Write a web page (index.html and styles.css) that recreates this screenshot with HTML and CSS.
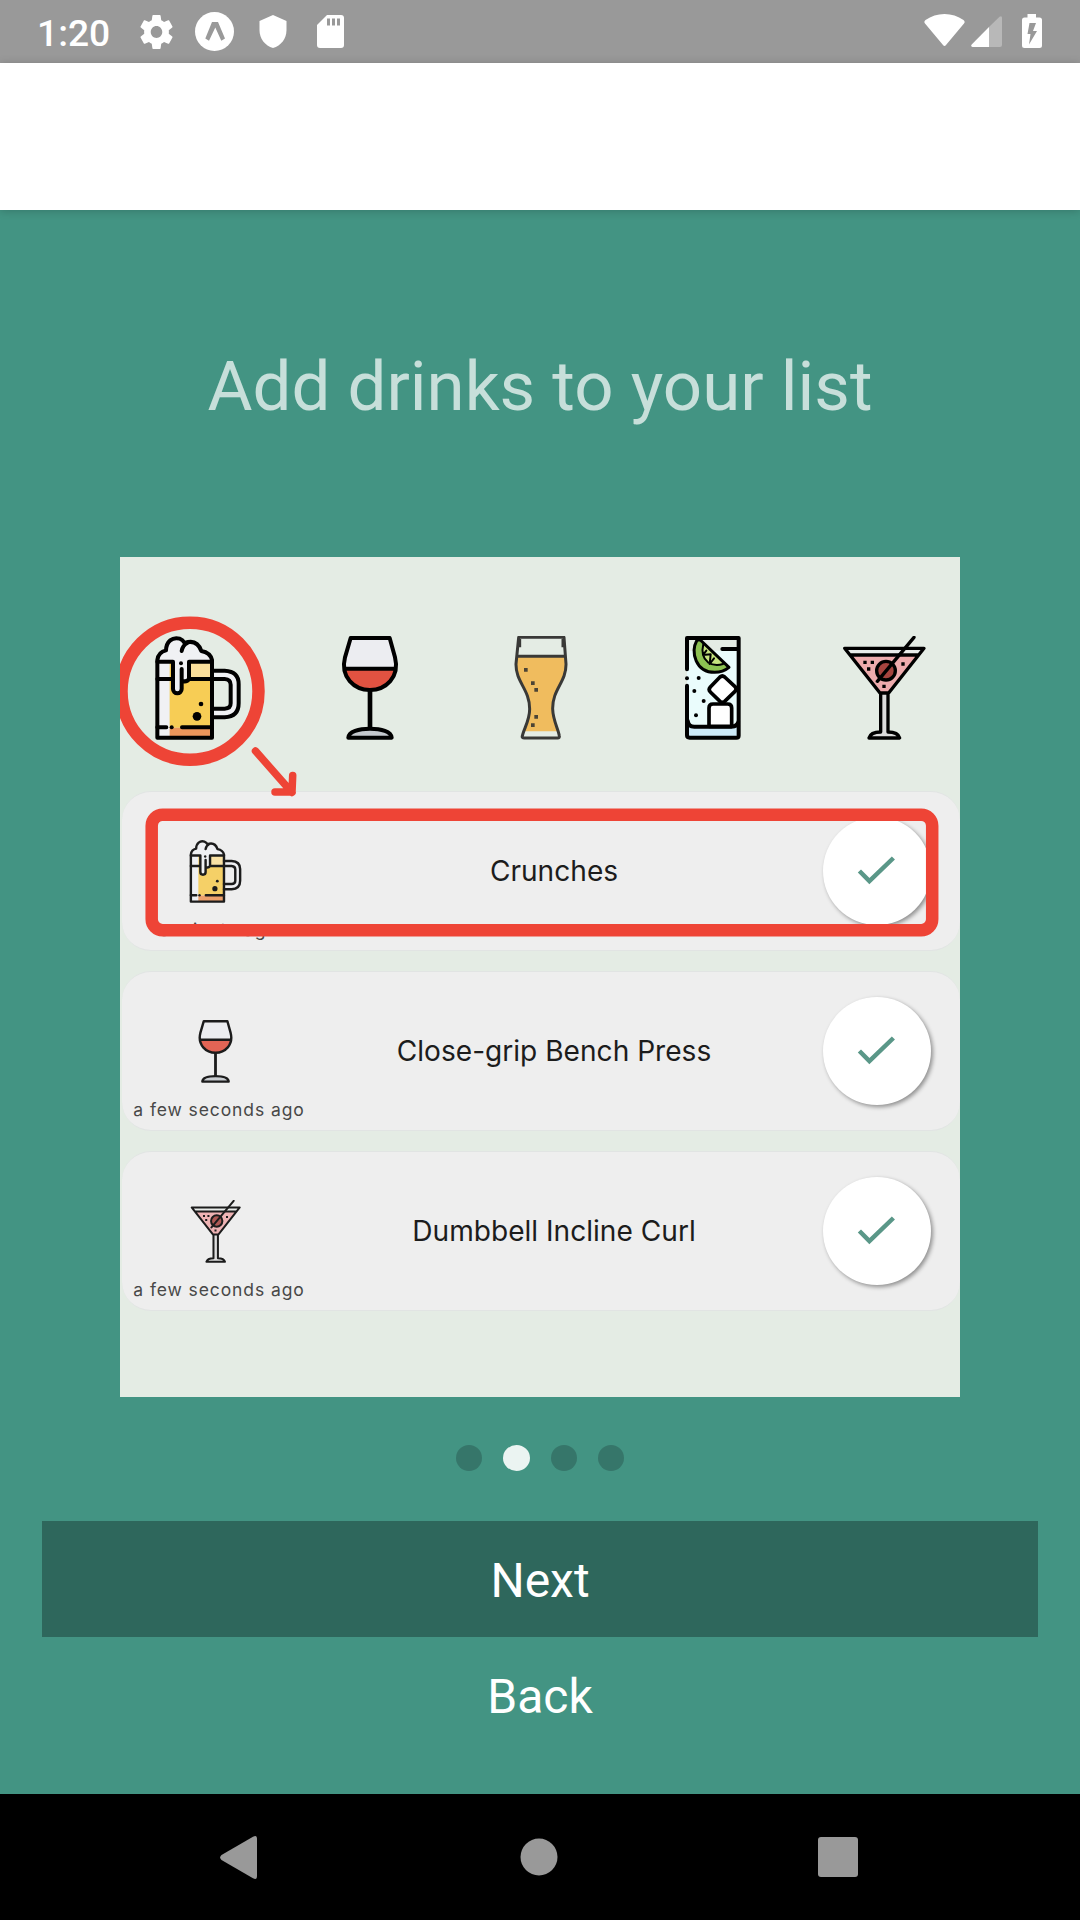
FILE: index.html
```html
<!DOCTYPE html>
<html lang="en">
<head>
<meta charset="utf-8">
<title>Add drinks to your list</title>
<link rel="stylesheet" href="styles.css">
</head>
<body>
<svg class="sprite" aria-hidden="true">
  <symbol id="mug" viewBox="109 106 312 312">
    <path fill="#f0f1f4" d="M143 183V170Q148 152 169 149C170 122 188 110 205 113Q218 115 225 125Q262 115 275 152Q302 154 307 180V183Z"/>
    <path fill="#f0f1f4" d="M143 183H216V235H180V411H143Z"/>
    <path fill="#f7cd55" d="M180 183H307V381H180Z"/>
    <path fill="#fbe09c" d="M240 183H307V235H240Z"/>
    <path fill="#ec965b" d="M180 381H307V411H180Z"/>
    <path fill="#f0f1f4" d="M190 180H240V235Q230 245 216 240V265A13 13 0 0 1 190 265Z"/>
    <path fill="#f0f1f4" fill-rule="evenodd" d="M307 210H345Q387 212 387 250V308Q387 348 345 350H307ZM307 235V324H345Q363 324 363 308V252Q363 236 345 235Z"/>
    <g fill="none" stroke="#000" stroke-width="12" stroke-linejoin="round" stroke-linecap="round">
      <path d="M143 411V178Q146 154 169 149C170 122 188 108 210 114Q219 117 225 127Q262 114 275 151Q302 156 307 178V411Z"/>
      <path d="M233 127Q219 134 216 151M143 183H190V265A13 13 0 0 0 216 265V205M216 240Q230 246 238 235V183H307M143 235H188M240 235H307M143 380H170M217 380H307"/>
      <path d="M307 210H345Q387 212 387 250V308Q387 348 345 350H307M307 235H345Q363 236 363 252V308Q363 324 345 324H307"/>
    </g>
    <circle cx="214" cy="188" r="6"/><circle cx="186" cy="380" r="6"/><circle cx="274" cy="310" r="7"/><circle cx="262" cy="347" r="13"/>
  </symbol>
  <symbol id="wine" viewBox="-8 76 312 312">
    <path fill="#ecedf1" d="M90 82H207L223 140C238 200 195 238 148 238S58 200 73 140Z"/>
    <path fill="#e25241" d="M71 175H225C222 212 190 238 148 238S74 212 71 175Z"/>
    <path fill="#c5c9ce" d="M83 381C84 362 115 354 148 354S212 362 213 381Z"/>
    <g fill="none" stroke="#000" stroke-width="12" stroke-linejoin="round">
      <path d="M90 82H207L223 140C238 200 195 238 148 238S58 200 73 140ZM71 174H225M83 381C84 362 115 354 148 354S212 362 213 381Z"/>
      <path stroke-width="14" d="M148 238V354"/>
    </g>
  </symbol>
  <symbol id="pint" viewBox="508 76 312 312">
    <path fill="#f0bc5e" d="M590 137H738L740 160C740 215 698 235 699 295C700 322 710 344 715 362H613C620 340 630 322 630 295C630 235 588 215 589 160Z"/>
    <path fill="none" stroke="#393937" stroke-width="9" stroke-linejoin="round" d="M597 80H733L739 160C740 215 698 235 699 295C700 330 716 355 719 376Q720 382 714 382H614Q606 382 608 376C612 355 630 330 630 295C630 235 588 215 589 160ZM592 137H736M600 85V110M730 85V110"/>
    <path fill="#4c4435" d="M613 172h11v11h-11zM634 212h11v11h-11zM644 232h11v11h-11zM644 313h11v11h-11zM634 338h11v11h-11z"/>
  </symbol>
  <symbol id="gin" viewBox="4 76 312 312">
    <path fill="#eafcfc" d="M82 120H237V348H82Z"/>
    <path fill="#cdeaf8" d="M82 348H237V381H82Z"/>
    <path fill="#8cc152" d="M118 88L208 170Q190 185 165 185C108 185 92 125 112 88Z"/>
    <path fill="#c5e27f" d="M131 100L192 158Q170 168 145 155Q122 137 131 100Z"/>
    <g fill="none" stroke="#000" stroke-width="12" stroke-linejoin="round" stroke-linecap="round">
      <path d="M82 176V82H237V375Q237 381 230 381H90Q82 381 82 374V225M188 115H237M84 330Q86 348 104 348H215Q234 348 237 330"/>
      <path stroke-width="9" d="M122 88L208 170Q190 185 165 185C108 185 92 125 112 88Z"/>
      <path stroke-width="6" d="M131 100Q122 137 145 155Q165 168 190 160M140 120L130 133L153 131L150 160L163 143"/>
      <path fill="#fff" stroke-width="11" d="M181 199Q188 193 195 199L226 228Q233 235 226 242L195 272Q188 278 181 272L152 244Q145 237 152 229Z"/>
      <path fill="#fff" stroke-width="11" d="M148 347V292Q148 280 160 280H204Q216 280 216 292V347Z"/>
    </g>
    <circle cx="82" cy="203" r="6"/><circle cx="117" cy="202" r="6"/><circle cx="104" cy="241" r="6"/><circle cx="132" cy="271" r="6"/><circle cx="109" cy="314" r="6"/>
  </symbol>
  <symbol id="martini" viewBox="516 76 312 312">
    <path fill="#e9ecea" d="M554 113H792L775 134H570Z"/>
    <path fill="#eeabad" d="M571 134H775L686 247H660Z"/>
    <path fill="#dcdcdc" d="M627 382Q632 364 662 364V247H684V364Q714 364 719 382Z"/>
    <circle cx="678" cy="180" r="27" fill="#a5443f"/>
    <g fill="none" stroke="#000" stroke-width="10" stroke-linejoin="round" stroke-linecap="round">
      <path d="M554 113H792L686 247H660ZM571 133H774M627 382Q632 364 662 364V247H684V364Q714 364 719 382Z"/>
      <circle cx="678" cy="180" r="28"/>
      <path d="M762 80L652 212"/>
    </g>
    <path d="M610 150h10v10h-10zM632 150h10v10h-10zM621 170h10v10h-10zM724 155h10v10h-10zM667 222h10v10h-10z"/>
  </symbol>
  <symbol id="check" viewBox="0 0 108 108">
    <path fill="none" stroke="#5a9788" stroke-width="4.5" d="M36.4 54L46.4 64.200L70.4 41"/>
  </symbol>
</svg>

<header class="status">
  <span class="clock">1:20</span>
  <svg class="gear" width="33" height="34" viewBox="2 2 20 20" preserveAspectRatio="none"><path fill="#fff" d="M19.43 12.98c.04-.32.07-.64.07-.98s-.03-.66-.07-.98l2.11-1.65c.19-.15.24-.42.12-.64l-2-3.46c-.12-.22-.39-.3-.61-.22l-2.49 1c-.52-.4-1.08-.73-1.69-.98l-.38-2.65C14.46 2.18 14.25 2 14 2h-4c-.25 0-.46.18-.49.42l-.38 2.65c-.61.25-1.17.59-1.69.98l-2.49-1c-.23-.09-.49 0-.61.22l-2 3.46c-.13.22-.07.49.12.64l2.11 1.65c-.04.32-.07.65-.07.98s.03.66.07.98l-2.11 1.65c-.19.15-.24.42-.12.64l2 3.46c.12.22.39.3.61.22l2.49-1c.52.4 1.08.73 1.69.98l.38 2.65c.03.24.24.42.49.42h4c.25 0 .46-.18.49-.42l.38-2.65c.61-.25 1.17-.59 1.69-.98l2.49 1c.23.09.49 0 .61-.22l2-3.46c.12-.22.07-.49-.12-.64l-2.11-1.65zM12 15.5c-1.93 0-3.5-1.57-3.5-3.5s1.57-3.5 3.5-3.5 3.5 1.57 3.5 3.5-1.57 3.5-3.5 3.5z"/></svg>
  <svg class="expo" width="39" height="39" viewBox="0 0 39 39"><circle cx="19.5" cy="19.5" r="19.5" fill="#fff"/><path fill="#999" d="M17 10H23L30 26.5L26.3 28.8L20.3 15.5L14 28.8L10.3 26.5Z"/></svg>
  <svg class="shield" width="28" height="33" viewBox="0 0 28 33"><path fill="#fff" d="M14 0L27.5 6V15C27.5 24 22 30.500 14 33C6 30.500 .5 24 .5 15V6Z"/></svg>
  <svg class="sd" width="27" height="33" viewBox="0 0 27 33"><path fill="#fff" d="M10 0H24Q27 0 27 3V30Q27 33 24 33H3Q0 33 0 30V10Z"/><path fill="#999" d="M10 3.500h3v7h-3zM15 3.500h3v7h-3zM20 3.500h3v7h-3z"/></svg>
  <svg class="wifi" width="41" height="33" viewBox="0 0 41 33"><path fill="#fff" d="M1 9.500Q-.5 7.500 1.500 6Q10 0 20.500 0T39.500 6Q41.500 7.500 40 9.500L22 31Q20.500 33 19 31Z"/></svg>
  <svg class="signal" width="31" height="31" viewBox="0 0 31 31"><path fill="#b8b8b8" d="M28.500 .7Q31 -.8 31 2V29Q31 31 29 31H18V11Z"/><path fill="#fff" d="M18 11V31H1.500Q-.7 30.500 .7 28.500Z"/></svg>
  <svg class="battery" width="20" height="34" viewBox="0 0 20 34"><path fill="#fff" d="M5.500 0H14V3.500H17.500Q20 3.500 20 6V31.500Q20 34 17.500 34H2.500Q0 34 0 31.500V6Q0 3.500 2.500 3.500H5.500Z"/><path fill="#999" d="M7.500 9H14L11 17H15L7 30.500L8.500 20H5.500Z"/></svg>
</header>
<div class="toolbar"></div>

<main class="screen">
  <h1 class="title">Add drinks to your list</h1>

  <section class="preview">
    <div class="drinks">
      <svg class="drink"><use href="#mug"/></svg>
      <svg class="drink"><use href="#wine"/></svg>
      <svg class="drink"><use href="#pint"/></svg>
      <svg class="drink"><use href="#gin"/></svg>
      <svg class="drink"><use href="#martini"/></svg>
    </div>
    <div class="cards">
      <article class="card">
        <div class="entry"><svg class="entry-icon"><use href="#mug"/></svg><span class="ago">a minute ago</span></div>
        <span class="name">Crunches</span>
        <span class="done"><svg width="108" height="108"><use href="#check"/></svg></span>
      </article>
      <article class="card">
        <div class="entry"><svg class="entry-icon"><use href="#wine"/></svg><span class="ago">a few seconds ago</span></div>
        <span class="name">Close-grip Bench Press</span>
        <span class="done"><svg width="108" height="108"><use href="#check"/></svg></span>
      </article>
      <article class="card">
        <div class="entry"><svg class="entry-icon"><use href="#martini"/></svg><span class="ago">a few seconds ago</span></div>
        <span class="name">Dumbbell Incline Curl</span>
        <span class="done"><svg width="108" height="108"><use href="#check"/></svg></span>
      </article>
    </div>
    <svg class="marks" viewBox="120 557 840 840">
      <g fill="none" stroke="#ee4436" stroke-width="12.500">
        <ellipse cx="190" cy="691.200" rx="68.500" ry="68.500"/>
        <rect x="151.700" y="814.700" width="780.500" height="115.500" rx="11"/>
        <path stroke-width="7.500" stroke-linecap="round" stroke-linejoin="round" d="M255.500 751L292 792.500M292.700 775.500L292 792H275"/>
      </g>
    </svg>
  </section>

  <div class="dots"><i class="dot"></i><i class="dot dot-on"></i><i class="dot"></i><i class="dot"></i></div>
  <button class="btn btn-next">Next</button>
  <button class="btn">Back</button>
</main>

<nav class="nav">
  <svg width="37" height="43" viewBox="0 0 37 43"><path fill="#999" d="M33 .8Q37 -1.500 37 3V40Q37 44.500 33 42.200L1.500 24Q-1.200 21.500 1.500 19Z"/></svg>
  <svg class="home" width="38" height="38" viewBox="0 0 38 38"><circle cx="19" cy="19" r="18.500" fill="#999"/></svg>
  <svg width="40" height="40" viewBox="0 0 40 40"><rect width="40" height="40" rx="3" fill="#999"/></svg>
</nav>
</body>
</html>
```
FILE: styles.css
```css
* { box-sizing: border-box; }

body {
  margin: 0;
  width: 1080px;
  height: 1920px;
  display: flex;
  flex-direction: column;
  overflow: hidden;
  background: #439483;
  font-family: Roboto, sans-serif;
}

svg { display: block; flex: none; }
.sprite { position: absolute; width: 0; height: 0; }

.status {
  height: 63px;
  flex: none;
  display: flex;
  align-items: center;
  padding: 0 38.500px 0 37px;
  background: #999;
  color: #fff;
}
.clock { width: 103px; font-size: 37.200px; font-weight: 500; line-height: 44px; padding-top: 3px; }
.expo { margin-left: 22px; }
.shield { margin-left: 25px; }
.sd { margin-left: 30px; }
.wifi { margin-left: auto; margin-top: -3px; }
.signal { margin-left: 6px; }
.battery { margin-left: 20px; margin-top: -1px; }

.toolbar {
  height: 147px;
  flex: none;
  background: #fff;
  box-shadow: 0 1px 9px rgba(0, 0, 0, .2);
}

.screen {
  flex: 1;
  display: flex;
  flex-direction: column;
  align-items: center;
}
.title {
  margin: 135px 0 0;
  font-size: 69px;
  font-weight: 400;
  line-height: 84px;
  color: rgba(255, 255, 255, .7);
}

.preview {
  position: relative;
  width: 840px;
  height: 840px;
  flex: none;
  margin-top: 128px;
  padding: 79px 0 0;
  background: #e4ece4;
  overflow: hidden;
}
.drinks { display: flex; justify-content: space-between; padding: 0 24px 0 26px; }
.drink { width: 104px; height: 104px; }
.cards { display: flex; flex-direction: column; gap: 20px; margin: 51px 0 0 2px; }
.card {
  height: 160px;
  display: grid;
  grid-template-columns: 194px 476px 168px;
  align-items: center;
  border: solid #e1e4e3;
  border-width: 1px 0;
  border-radius: 29px;
  background: #eee;
}
.entry { align-self: start; display: flex; flex-direction: column; align-items: center; padding-top: 48px; }
.entry-icon { width: 63px; height: 63px; margin-right: 8px; opacity: .88; }
.ago {
  margin-top: 15px;
  font: 400 17.500px/24px Inter, sans-serif;
  letter-spacing: .9px;
  color: #484848;
  white-space: nowrap;
}
.name {
  text-align: center;
  margin-top: -1px;
  font: 400 28.100px/36px Inter, sans-serif;
  color: #1c1c1c;
}
.done {
  width: 108px;
  height: 108px;
  margin-left: 31px;
  border-radius: 50%;
  background: #fff;
  box-shadow: 2px 2px 4px rgba(0, 0, 0, .4);
}
.marks { position: absolute; left: 0; top: 0; width: 840px; height: 840px; }

.dots { display: flex; gap: 21.300px; margin-top: 48px; }
.dot { width: 26px; height: 26px; border-radius: 50%; background: #36766a; }
.dot-on { width: 27px; background: #ebf4f2; }

.btn {
  width: 996px;
  height: 116px;
  border: 0;
  padding: 3px 0 0;
  background: none;
  color: #fff;
  font: 400 48px/56px Roboto, sans-serif;
}
.btn-next { margin-top: 50px; background: #2e675c; }

.nav {
  height: 126px;
  flex: none;
  display: flex;
  align-items: center;
  justify-content: space-between;
  padding: 0 222px 0 220px;
  background: #000;
}
.home { margin-left: 3px; }
```
